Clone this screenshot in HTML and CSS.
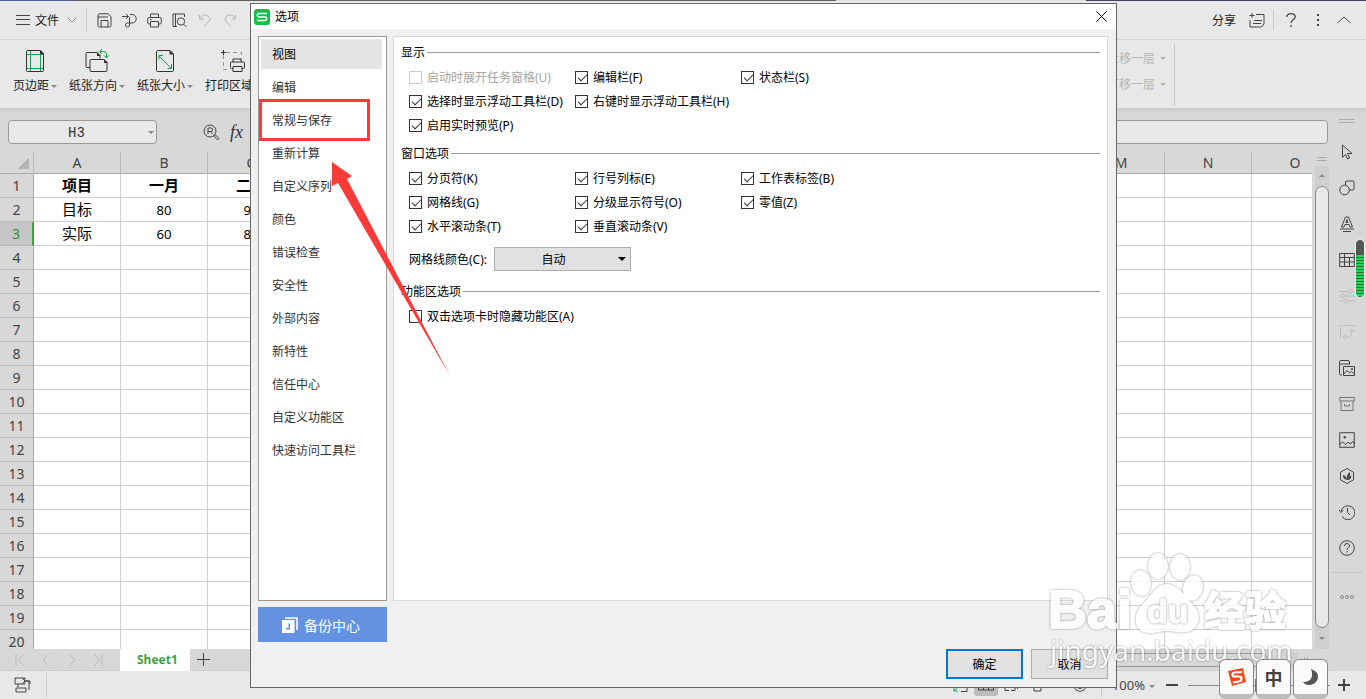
FILE: index.html
```html
<!DOCTYPE html>
<html lang="zh-CN">
<head>
    <meta charset="utf-8">
    <title>选项</title>
    <link rel="stylesheet" href="styles.css">
</head>
<body>
<div class="app">

    <!-- 顶部菜单栏 -->
    <header class="topbar">
        <button class="file-menu" type="button">
            <svg class="menu-lines" width="14" height="10" viewBox="0 0 14 10"><path d="M0 .5h14M0 4.500h14M0 9.500h14"/></svg>
            文件
            <svg width="10" height="6" viewBox="0 0 10 6"><path d="M.5.5 5 5 9.500.5"/></svg>
        </button>
        <span class="divider"></span>
        <div class="quick">
            <button type="button" aria-label="保存"><svg width="15" height="15" viewBox="0 0 15 15"><path d="M3 .8h8l3 3v8.700a1.500 1.500 0 0 1-1.500 1.500h-10A1.500 1.500 0 0 1 1 12.500v-10Q1 .8 3 .8ZM4 14V7.500h7V14M1 4h10"/></svg></button>
            <button type="button" aria-label="输出"><svg width="15" height="15" viewBox="0 0 15 15"><path d="M0 3.500h6M4 1l2.500 2.500L4 6M8 1.500h2a4 4 0 0 1 0 8.500H5.500M7.500 4v8a2 2 0 1 1-2-2"/></svg></button>
            <button type="button" aria-label="打印"><svg width="15" height="15" viewBox="0 0 15 15"><path d="M3.500 4.500V1h8v3.500M3.500 11H2.200A1.500 1.500 0 0 1 .7 9.500V6a1.500 1.500 0 0 1 1.500-1.500h10.600A1.500 1.500 0 0 1 14.300 6v3.500a1.500 1.500 0 0 1-1.500 1.500h-1.300M3.500 8.500h8V14h-8ZM3 6.500h1.500"/></svg></button>
            <button type="button" aria-label="打印预览"><svg width="15" height="15" viewBox="0 0 15 15"><path d="M5 13.500H1V1h11.500v3M3.500 1v12"/><circle cx="9" cy="8.500" r="3.700"/><path d="m11.800 11.300 2.700 2.700"/></svg></button>
            <button class="off" type="button" aria-label="撤销"><svg width="14" height="14" viewBox="0 0 14 14"><path d="M1.500 2v4h4M1.500 6c2-4 6-5 8.500-3 2.500 2 2 4.500 0 6.500l-4 4"/></svg></button>
            <button class="off" type="button" aria-label="恢复"><svg width="14" height="14" viewBox="0 0 14 14"><path d="M12.500 2v4h-4M12.500 6c-2-4-6-5-8.500-3-2.500 2-2 4.500 0 6.500l4 4"/></svg></button>
        </div>
        <div class="top-right">
            <button type="button">分享</button>
            <button type="button" aria-label="批注"><svg width="16" height="15" viewBox="0 0 16 15"><path d="M3 0v5M.5 2.500h5M7 1.500h8V11l-2.500 3H1V7M5 7.500h8M4 10.500h8"/></svg></button>
            <span class="divider small"></span>
            <button type="button" aria-label="帮助"><svg width="10" height="14" viewBox="0 0 10 14"><path d="M.8 4C.8 2 2.500.7 5 .7S9.200 2 9.200 4C9.200 6.500 5 6.500 5 10M5 12v2" stroke-width="1.300"/></svg></button>
            <button type="button" aria-label="更多"><svg width="2" height="12" viewBox="0 0 2 12"><path d="M1 0v2M1 5v2M1 10v2" stroke-width="2"/></svg></button>
            <button type="button" aria-label="收起"><svg width="14" height="8" viewBox="0 0 14 8"><path d="m.5 7 6.500-6 6.500 6"/></svg></button>
        </div>
    </header>

    <!-- 页面布局工具 -->
    <div class="ribbon">
        <button class="tool" type="button">
            <svg width="22" height="26" viewBox="0 0 22 26"><path class="green" d="M6.500 3v20M16.500 3v20M3 6.500h17M3 20.500h17"/><path class="dark" d="M4 2.500h12.500l3 3v17a1 1 0 0 1-1 1H3.500a1 1 0 0 1-1-1v-19q0-1 1.500-1Z"/><path class="solid" d="M16 2v4h4Z"/></svg>
            <span>页边距<i class="caret"></i></span>
        </button>
        <button class="tool" type="button">
            <svg width="26" height="26" viewBox="0 0 26 26"><path class="dark" d="M6 19.500H3a1 1 0 0 1-1-1v-13a1 1 0 0 1 1-1h10l3 3v3M7 11.500h13l3 3v8a1 1 0 0 1-1 1H7a1 1 0 0 1-1-1v-10a1 1 0 0 1 1-1Z"/><path class="solid" d="M13 4v4h4ZM20 11v4h4Z"/><path class="green" d="M16 3.500h4q2.500 0 2.500 3V10M18 1l-2.500 2.500L18 6M20 7.500l2.500 2.500L25 7.500"/></svg>
            <span>纸张方向<i class="caret"></i></span>
        </button>
        <button class="tool" type="button">
            <svg width="22" height="26" viewBox="0 0 22 26"><path class="green" d="m5 8 12 12M5 11.500V7.500h4M17.500 16v4.500h-4"/><path class="dark" d="M4 2.500h12l3.500 3.500v16.500a1 1 0 0 1-1 1h-15a1 1 0 0 1-1-1v-19q0-1 1.500-1Z"/><path class="solid" d="M15.500 2v4.500H20Z"/></svg>
            <span>纸张大小<i class="caret"></i></span>
        </button>
        <button class="tool" type="button">
            <svg width="26" height="26" viewBox="0 0 26 26"><path class="dash" d="M6 4.500h15.500V11M3.500 7v14.500H8"/><path class="dark" d="M3.500 2v5M1 4.500h5M13 14v-3h8v3M13 20.500h-1.500a1 1 0 0 1-1-1V15a1 1 0 0 1 1-1h12a1 1 0 0 1 1 1v4.500a1 1 0 0 1-1 1H22M13 18.500h9v5h-9Z"/></svg>
            <span>打印区域<i class="caret"></i></span>
        </button>
        <div class="layers">
            <button type="button" disabled>上移一层<i class="caret"></i></button>
            <button type="button" disabled>下移一层<i class="caret"></i></button>
        </div>
    </div>

    <div class="work">
        <main class="book">
            <div class="formula">
                <div class="name-box">
                    <input type="text" value="H3" aria-label="名称框">
                    <i class="caret"></i>
                </div>
                <svg class="find" width="17" height="17" viewBox="0 0 17 17"><circle cx="7" cy="7" r="6"/><path d="M5 10V4h3a1.500 1.500 0 0 1 0 3.500H5M7.500 7.500 9.500 10M11 12l1.500-1 3.500 3.500-1.500 1.500Z"/></svg>
                <span class="fx">fx</span>
                <input class="formula-input" type="text" aria-label="编辑栏">
            </div>
            <div class="sheet">
                <div class="grid">
                    <table>
                        <thead><tr id="cols"><th class="corner"></th></tr></thead>
                        <tbody id="rows"></tbody>
                    </table>
                </div>
                <div class="vscroll">
                    <span class="split"></span>
                    <div class="track">
                        <i class="up"></i>
                        <span class="thumb"></span>
                        <i class="down"></i>
                    </div>
                </div>
            </div>
            <div class="tabs">
                <div class="tab-nav">
                    <svg width="10" height="12" viewBox="0 0 10 12"><path d="M1 0v12M9 0 3.500 6 9 12"/></svg>
                    <svg width="10" height="12" viewBox="0 0 10 12"><path d="M8 0 2 6l6 6"/></svg>
                    <svg width="10" height="12" viewBox="0 0 10 12"><path d="m2 0 6 6-6 6"/></svg>
                    <svg width="10" height="12" viewBox="0 0 10 12"><path d="M9 0v12M1 0l5.500 6L1 12"/></svg>
                </div>
                <button class="tab" type="button">Sheet1</button>
                <button class="add" type="button" aria-label="新建工作表"><svg width="13" height="13" viewBox="0 0 13 13"><path d="M6.500 0v13M0 6.500h13"/></svg></button>
                <span class="hscroll"></span>
                <span class="hend"></span>
                <span class="hgrip"></span>
            </div>
        </main>

        <!-- 右侧任务窗格图标 -->
        <aside class="side">
            <span class="grip"></span>
            <svg viewBox="0 0 16 16"><path d="M3.500 1v12.500l3-3 2 4.500 2-1-2-4.500h4.500Z"/></svg>
            <svg viewBox="0 0 16 16"><circle cx="5.500" cy="10" r="4.800"/><path d="M6.500 5V2a1 1 0 0 1 1-1H14a1 1 0 0 1 1 1v7a1 1 0 0 1-1 1h-3.500"/></svg>
            <svg viewBox="0 0 16 16"><path d="M2.500 11 6.500 1h3l4 10h-2.500L10 8.500H6L5 11ZM7 6.500h2L8 3.500ZM1 13h14M4 15.500h8"/></svg>
            <svg viewBox="0 0 16 16"><path d="M.7 1.500h14.600v13H.7ZM.7 5.500h14.600M.7 10h14.600M5.500 1.500v13M10.500 5.500v9"/></svg>
            <svg class="off" viewBox="0 0 16 16"><path d="M0 3.500h9M13 3.500h3M0 8h2M6 8h10M0 13h5M9 13h7"/><circle cx="11" cy="3.500" r="2"/><circle cx="4" cy="8" r="2"/><circle cx="7" cy="13" r="2"/></svg>
            <svg class="off" viewBox="0 0 16 16"><path d="M4 1.500h12M1.500 4v11M1 1h1v1H1ZM4 13h5q4 0 4-7M7 10l-3 3 3 3M10 8l3-3 3 3"/></svg>
            <svg viewBox="0 0 16 16"><path d="M3 15H2a1.500 1.500 0 0 1-1.500-1.500V2A1.500 1.500 0 0 1 2 .5h7A1.500 1.500 0 0 1 10.500 2v2.500M.5 4H10M4.500 6.500h11v9h-11ZM5 14l3-3.500 2.500 2.500 2-1.500 3 2.500M12.500 8.500h1v1h-1Z"/></svg>
            <svg class="soft" viewBox="0 0 16 16"><path d="M.7 1.500h14.600V5H.7ZM2 5v9.500h12V5M5.500 8v2h5V8"/></svg>
            <svg viewBox="0 0 16 16"><path d="M.7.7h14.600v14.600H.7ZM1 12l2.500-2 3 2.500L9 10l2.500 2 2-2.500 2 2.500M5 4.500h1.500V6H5Z"/></svg>
            <svg viewBox="0 0 16 16"><path d="m8 .5 6.500 3.700v7.600L8 15.500l-6.500-3.700V4.200Z"/><path class="fill" d="M8 12Q3.500 11 4 7q3 .5 4 5M8 12q-1-5 2.500-8 1.500 3-.5 5 1-1 2.500-1.500Q12 12 8 12"/></svg>
            <svg viewBox="0 0 16 16"><path d="M3 12.500A7 7 0 1 0 2 7.500M0 6l2 2.500L4.500 6M8.500 4v4.500L11 11"/></svg>
            <svg viewBox="0 0 16 16"><circle cx="8" cy="8" r="7.300"/><path d="M5.500 6q0-2.500 2.500-2.500T10.500 6C10.500 7.500 8 8 8 10M8 11v1.500"/></svg>
            <span class="line"></span>
            <span class="dots"><i></i><i></i><i></i></span>
        </aside>
    </div>

    <!-- 状态栏 -->
    <footer class="status">
        <svg class="macro" width="17" height="16" viewBox="0 0 17 16"><path d="M1 1h10v6H1ZM8 1l3 3-3 3M4 7v3M2 15v-4h10v4ZM12 4h3v9M11 4h5v3"/></svg>
        <span class="divider"></span>
        <div class="views">
            <svg width="16" height="16" viewBox="0 0 16 16"><path d="M9 14.500h6V10"/><path class="green" d="m2 14 4-4M2 10v4h4"/></svg>
            <span class="picked"><svg width="16" height="16" viewBox="0 0 16 16"><path d="M.5 2h15v11H.5ZM.5 9.500h15M5.500 2v11M10.500 2v11"/></svg></span>
            <svg width="16" height="16" viewBox="0 0 16 16"><path d="M5 13.500H1V2M7 13.500h4V6M13.500 2v10"/></svg>
            <svg width="16" height="16" viewBox="0 0 16 16"><path d="M1 3h14v6H1ZM4 9v5h7V9"/></svg>
            <svg class="eye" width="18" height="16" viewBox="0 0 18 16"><path d="M1 8q8-13 16 0-8 13-16 0"/><circle cx="9" cy="8" r="3.500"/></svg>
        </div>
        <span class="divider"></span>
        <span class="zoom-text">100%<i class="caret"></i></span>
        <button type="button" aria-label="缩小"><svg width="12" height="12" viewBox="0 0 12 12"><path d="M0 6h12" stroke-width="2"/></svg></button>
        <input class="zoom" type="range" min="10" max="400" value="205" aria-label="缩放">
        <button type="button" aria-label="放大"><svg width="12" height="12" viewBox="0 0 12 12"><path d="M0 6h12M6 0v12" stroke-width="2"/></svg></button>
    </footer>

    <span class="gauge"></span>

    <!-- 选项对话框 -->
    <section class="dialog">
        <div class="dialog-title">
            <svg width="16" height="16" viewBox="0 0 16 16"><rect width="16" height="16" rx="3" fill="#12be46"/><path d="M13 4.500H5a1.700 1.700 0 0 0 0 3.500h6a1.700 1.700 0 0 1 0 3.500H3" fill="none" stroke="#fff" stroke-width="1.400"/></svg>
            <h2>选项</h2>
            <button type="button" aria-label="关闭"><svg width="11" height="11" viewBox="0 0 11 11"><path d="m.5.5 10 10M10.500.5l-10 10"/></svg></button>
        </div>
        <div class="dialog-body">
            <nav class="menu">
                <a class="active" href="#">视图</a>
                <a href="#">编辑</a>
                <a href="#">常规与保存</a>
                <a href="#">重新计算</a>
                <a href="#">自定义序列</a>
                <a href="#">颜色</a>
                <a href="#">错误检查</a>
                <a href="#">安全性</a>
                <a href="#">外部内容</a>
                <a href="#">新特性</a>
                <a href="#">信任中心</a>
                <a href="#">自定义功能区</a>
                <a href="#">快速访问工具栏</a>
            </nav>
            <div class="panel">
                <h3>显示</h3>
                <div class="checks">
                    <label class="disabled"><input type="checkbox" disabled>启动时展开任务窗格(U)</label>
                    <label><input type="checkbox" checked>编辑栏(F)</label>
                    <label><input type="checkbox" checked>状态栏(S)</label>
                    <label><input type="checkbox" checked>选择时显示浮动工具栏(D)</label>
                    <label class="wide"><input type="checkbox" checked>右键时显示浮动工具栏(H)</label>
                    <label><input type="checkbox" checked>启用实时预览(P)</label>
                </div>
                <h3>窗口选项</h3>
                <div class="checks">
                    <label><input type="checkbox" checked>分页符(K)</label>
                    <label><input type="checkbox" checked>行号列标(E)</label>
                    <label><input type="checkbox" checked>工作表标签(B)</label>
                    <label><input type="checkbox" checked>网格线(G)</label>
                    <label><input type="checkbox" checked>分级显示符号(O)</label>
                    <label><input type="checkbox" checked>零值(Z)</label>
                    <label><input type="checkbox" checked>水平滚动条(T)</label>
                    <label><input type="checkbox" checked>垂直滚动条(V)</label>
                </div>
                <div class="color-row">
                    <label for="lineColor">网格线颜色(C):</label>
                    <span class="select"><select id="lineColor"><option>自动</option></select></span>
                </div>
                <h3>功能区选项</h3>
                <div class="checks">
                    <label class="wide"><input type="checkbox">双击选项卡时隐藏功能区(A)</label>
                </div>
            </div>
        </div>
        <div class="dialog-foot">
            <button class="backup" type="button">
                <svg width="16" height="16" viewBox="0 0 16 16"><path d="M3 1h12v12" fill="none" stroke="#fff" stroke-width="1.500"/><path d="M0 3h12.500v13H0ZM6.500 6.500v4.500H4v1.500h4v-6Z" fill="#fff" fill-rule="evenodd"/></svg>
                备份中心
            </button>
            <div class="actions">
                <button class="ok" type="button">确定</button>
                <button type="button">取消</button>
            </div>
        </div>
        <!-- 红色标注 -->
        <span class="mark"></span>
        <svg class="arrow" width="119" height="216" viewBox="0 0 119 216"><path d="M0 0 20 14 15 17 118 214 6 21 0 24Z" fill="#fb3a3a"/></svg>
    </section>

    <!-- 水印 -->
    <svg class="watermark" width="250" height="125" viewBox="0 0 250 125">
        <g>
            <ellipse cx="95" cy="43" rx="9" ry="12" transform="rotate(-8 95 43)"/>
            <ellipse cx="112" cy="26" rx="9" ry="12"/>
            <ellipse cx="134" cy="27" rx="9" ry="12"/>
            <ellipse cx="147" cy="48" rx="9" ry="12" transform="rotate(15 147 48)"/>
            <path d="M121 45c-11 0-15 12-23 19-9 7-12 26 4 28 8 1 12-2 19-2s13 3 20 1c14-3 13-19 5-26-8-8-14-20-25-20Z"/>
        </g>
        <text class="wm-bai" x="2" y="88">Bai</text>
        <text class="wm-du" x="101" y="83">du</text>
        <text class="wm-cn" x="158" y="86">经验</text>
        <text class="wm-url" x="4" y="121">jingyan.baidu.com</text>
    </svg>

    <!-- 输入法 -->
    <div class="ime">
        <button type="button" aria-label="搜狗"><svg width="20" height="20" viewBox="0 0 20 20"><path d="m1 4 15-3 3 14-14 4Z" fill="#ee4c21"/><path d="M15 5 8 5.500q-3 .5-2.500 2.500T8 9.500h4q2.500 0 2.500 2.200T12 14.500l-6 1" fill="none" stroke="#fff" stroke-width="2.200"/></svg></button>
        <button type="button">中</button>
        <button type="button" aria-label="月亮"><svg width="18" height="18" viewBox="0 0 18 18"><path d="M9 1q8 3 7 9-2 7-9 7-4 0-6-3 8 0 9-6 .5-4-1-7Z" fill="#555"/></svg></button>
    </div>
</div>
<script src="script.js"></script>
</body>
</html>
```
FILE: styles.css
```css
* {
    box-sizing: border-box;
}

body {
    margin: 0;
    font-family: "Noto Sans", "Noto Sans CJK SC", sans-serif;
    font-size: 12px;
    color: #222;
    background: #e8e8e8;
}

button {
    font: inherit;
    color: inherit;
    background: none;
    border: none;
    padding: 0;
    display: flex;
    align-items: center;
    justify-content: center;
}

svg {
    fill: none;
    stroke: #444;
    display: block;
    flex: none;
}

.app {
    position: relative;
    height: 100vh;
    display: flex;
    flex-direction: column;
    overflow: hidden;
}

.divider {
    width: 1px;
    height: 24px;
    background: #ccc;
}

.divider.small {
    height: 20px;
}

.caret {
    display: inline-block;
    border: 3px solid transparent;
    border-top-color: #888;
    border-bottom: none;
    margin-left: 4px;
    vertical-align: middle;
}

.green {
    stroke: #1f9d55;
}

/* 顶部菜单栏 */
.topbar {
    height: 40px;
    padding: 1px 15px 0 16px;
    display: flex;
    align-items: center;
    border-bottom: 1px solid #d6d6d6;
    background: linear-gradient(90deg, #4a64a0 74px, #5f5f6b 74px 836px, #e0e0e6 836px 1086px, #44445a 1086px) top / 100% 1px no-repeat;
}

.file-menu {
    gap: 5px;
    margin-right: 9px;
}

.file-menu svg:last-child {
    margin-left: 3px;
    stroke: #888;
}

.quick {
    display: flex;
    margin-left: 5px;
}

.quick button {
    width: 25px;
}

.quick .off svg {
    stroke: #b5b5b5;
}

.top-right {
    margin-left: auto;
    display: flex;
    align-items: center;
}

.top-right button:nth-child(2) {
    margin: 0 8px 0 13px;
}

.top-right button:nth-child(4) {
    margin: 0 21px 0 12px;
}

.top-right button:nth-child(5) {
    margin-right: 18px;
}

/* 工具区 */
.ribbon {
    height: 68px;
    padding: 8px 191px 0 13px;
    display: flex;
    align-items: flex-start;
    gap: 12px;
}

.tool {
    flex-direction: column;
    white-space: nowrap;
}

.tool span {
    line-height: 20px;
    margin-top: 2px;
}

.tool .caret {
    margin-left: 2px;
}

.tool .dark {
    stroke: #333;
}

.tool .solid {
    fill: #333;
    stroke: none;
}

.tool .dash {
    stroke: #999;
    stroke-dasharray: 4 3;
}

.layers {
    margin: -4px 0 0 auto;
    padding: 1px 8px 9px 0;
    border-right: 1px solid #c8c8c8;
}

.layers button {
    height: 26px;
    color: #b5b5b5;
}

.layers .caret {
    border-top-color: #b5b5b5;
    margin-left: 5px;
}

/* 工作区 */
.work {
    flex: 1;
    min-height: 0;
    display: flex;
    background: linear-gradient(#c9c9c9, #d8d8d8 5px);
}

.book {
    flex: 1;
    min-width: 0;
    display: flex;
    flex-direction: column;
}

.formula {
    height: 44px;
    padding: 12px 1px 8px 8px;
    display: flex;
    align-items: center;
}

.name-box {
    position: relative;
    width: 149px;
}

.name-box input, .formula-input {
    width: 100%;
    height: 24px;
    display: block;
    border: 1px solid #999;
    border-radius: 4px;
    background: #e8e8e8;
    outline: none;
}

.name-box input {
    text-align: center;
    padding: 2px 12px 0 0;
    font: 14px "Liberation Mono", monospace;
    color: #333;
}

.name-box .caret {
    position: absolute;
    right: 3px;
    top: 11px;
}

.find {
    margin-left: 46px;
}

.fx {
    font: italic 18px "Liberation Serif", serif;
    color: #333;
    margin: 0 12px 0 10px;
}

.formula-input {
    flex: 1;
}

.sheet {
    flex: 1;
    min-height: 0;
    display: flex;
    gap: 3px;
}

.grid {
    flex: 1;
    overflow: hidden;
}

table {
    width: 1339px;
    table-layout: fixed;
    border-collapse: separate;
    border-spacing: 0;
    background: #fff;
}

th {
    font-weight: normal;
    font-size: 14px;
    color: #444;
    background: #d8d8d8;
    padding: 0;
}

thead th {
    width: 87px;
    height: 22px;
    line-height: 21px;
    border-bottom: 1px solid #aaa;
    border-right: 1px solid #bbb;
}

thead .corner {
    width: 34px;
    background: linear-gradient(135deg, transparent 50%, #b4b4b4 50%) 17px 6px / 12px 11px no-repeat #d8d8d8;
}

tbody th {
    height: 24px;
    line-height: 21px;
    border-right: 1px solid #aaa;
    border-bottom: 1px solid #bbb;
}

tbody .current {
    color: #2f8f35;
    background: #c6c6c6;
    border-right: 2px solid #3fa43f;
}

td {
    height: 24px;
    padding: 2px 0 0;
    line-height: 21px;
    text-align: center;
    font-size: 13px;
    color: #000;
    border-right: 1px solid #d0d0d0;
    border-bottom: 1px solid #d0d0d0;
}

td.head {
    padding: 0;
    font-size: 15px;
    font-weight: bold;
}

td.label {
    padding: 0;
    font-size: 15px;
}

/* 滚动条 */
.vscroll {
    width: 14px;
    display: flex;
    flex-direction: column;
}

.split {
    height: 4px;
    margin: 5px 2px;
    border-top: 1px solid #aaa;
    border-bottom: 1px solid #aaa;
}

.track {
    flex: 1;
    background: #cfcfcf;
    display: flex;
    flex-direction: column;
    align-items: center;
}

.up, .down {
    border: 3px solid transparent;
}

.up {
    margin: 8px 0 9px;
    border-top: none;
    border-bottom-color: #888;
}

.down {
    margin: 9px 0;
    border-bottom: none;
    border-top-color: #888;
}

.thumb {
    flex: 1;
    width: 14px;
    border: 1px solid #888;
    border-radius: 7px;
    background: #e8e8e8;
}

.tabs {
    height: 22px;
    padding-right: 21px;
    display: flex;
    align-items: center;
    border-bottom: 1px solid #ccc;
}

.tab-nav {
    width: 120px;
    padding-left: 15px;
    display: flex;
    gap: 16px;
}

.tab-nav svg {
    stroke: #bbb;
}

.tab {
    height: 22px;
    padding: 0 12px 0 17px;
    background: #fff;
    color: #3fa13f;
    font-weight: bold;
}

.add {
    margin-left: 7px;
}

.hscroll {
    flex: 1;
    height: 14px;
    margin-left: 200px;
    border: 1px solid #999;
    border-radius: 7px;
}

.hend {
    width: 13px;
    height: 14px;
    margin: 0 6px 0 17px;
    background: #cfcfcf;
}

.hgrip {
    width: 4px;
    height: 6px;
    border: 1px solid #aaa;
    border-width: 0 1px;
}

/* 右侧图标栏 */
.side {
    width: 37px;
    padding: 11px 1px 0 0;
    display: flex;
    flex-direction: column;
    align-items: center;
    gap: 20px;
}

.side svg {
    width: 16px;
    height: 16px;
}

.side .grip {
    width: 16px;
    height: 4px;
    margin-bottom: 1px;
    border-top: 1px solid #aaa;
    border-bottom: 1px solid #aaa;
}

.side .off {
    stroke: #bfbfbf;
}

.side .soft {
    stroke: #777;
}

.side .fill {
    fill: #444;
    stroke: none;
}

.side .line {
    width: 30px;
    height: 1px;
    margin: -4px 0 2px;
    background: #c3c3c3;
}

.dots {
    display: flex;
    gap: 1px;
}

.dots i {
    width: 4px;
    height: 4px;
    border: 1px solid #888;
    border-radius: 2px;
}

.gauge {
    position: absolute;
    right: 1px;
    top: 239px;
    width: 10px;
    height: 59px;
    border: 1px solid #eee;
    border-radius: 5px;
    background: linear-gradient(#555 15px, transparent 15px), repeating-linear-gradient(#25d35b 0 2px, #187438 2px 3px);
}

/* 状态栏 */
.status {
    height: 28px;
    padding: 0 16px 0 14px;
    display: flex;
    align-items: center;
}

.macro {
    margin-right: 15px;
}

.views {
    margin-left: auto;
    display: flex;
    align-items: center;
    gap: 10px;
}

.picked {
    padding: 3px 4px;
    margin: 0 -4px;
    background: #bbb;
    border-radius: 3px;
}

.eye {
    margin: 0 12px 0 15px;
}

.zoom-text {
    margin: 0 11px 0 10px;
    color: #444;
    font-size: 13px;
}

.zoom {
    appearance: none;
    width: 142px;
    height: 16px;
    margin: 0 8px 0 10px;
    background: linear-gradient(#888, #888) center / 100% 1px no-repeat;
}

.zoom::-webkit-slider-thumb {
    appearance: none;
    width: 9px;
    height: 13px;
    border: 1px solid #777;
    background: #eee;
}

/* 对话框 */
.dialog {
    position: absolute;
    top: 3px;
    left: 1px;
    right: 0;
    width: 867px;
    margin: 0 auto;
    border: 1px solid #666;
    background: #f0f0f0;
    color: #000;
}

.dialog-title {
    height: 25px;
    padding: 0 9px 0 3px;
    display: flex;
    align-items: center;
    background: #fff;
}

.dialog-title svg {
    stroke: none;
}

.dialog-title button svg {
    stroke: #000;
}

h2 {
    flex: 1;
    margin: 0 0 0 5px;
    font-size: 12px;
    line-height: 16px;
    font-weight: normal;
}

.dialog-body {
    padding: 7px 8px 0 7px;
    display: flex;
    gap: 6px;
}

.menu {
    width: 129px;
    padding: 2px;
    display: flex;
    flex-direction: column;
    gap: 3px;
    border: 1px solid #999;
    background: #fff;
}

.menu a {
    height: 30px;
    padding-left: 11px;
    margin-right: 2px;
    line-height: 32px;
    color: #333;
    text-decoration: none;
}

.menu .active {
    background: #e5e5e5;
    color: #000;
}

.panel {
    flex: 1;
    min-height: 565px;
    padding: 7px;
    border: 1px solid #d9d9d9;
    background: #fff;
}

h3 {
    height: 16px;
    margin: 0 0 5px;
    display: flex;
    align-items: center;
    gap: 2px;
    font-size: 12px;
    font-weight: normal;
}

h3::after {
    content: "";
    flex: 1;
    height: 1px;
    background: #999;
}

.checks {
    padding-left: 8px;
    margin-bottom: 8px;
    display: grid;
    grid-template-columns: 166px 166px 166px;
    grid-auto-rows: 24px;
}

.checks label {
    display: flex;
    align-items: center;
    gap: 5px;
    white-space: nowrap;
}

.checks .wide {
    grid-column: span 2;
}

.checks .disabled {
    color: #a5a5a5;
}

input[type="checkbox"] {
    appearance: none;
    position: relative;
    width: 13px;
    height: 13px;
    margin: 0;
    border: 1px solid #333;
    background: #fff;
}

input[type="checkbox"]:disabled {
    border-color: #ccc;
}

input[type="checkbox"]:checked::before {
    content: "";
    position: absolute;
    left: 4px;
    top: 0;
    width: 4px;
    height: 8px;
    border: 1px solid #333;
    border-width: 0 1px 1px 0;
    transform: rotate(45deg);
}

.color-row {
    padding-left: 8px;
    margin: 9px 0 12px;
    display: flex;
    align-items: center;
    gap: 7px;
}

.select {
    position: relative;
}

.select::after {
    content: "";
    position: absolute;
    right: 5px;
    top: 10px;
    border: 4px solid transparent;
    border-top-color: #000;
    border-bottom: none;
}

select {
    appearance: none;
    display: block;
    width: 137px;
    height: 24px;
    padding: 0 18px 0 0;
    border: 1px solid #adadad;
    border-radius: 0;
    background: #e1e1e1;
    font: inherit;
    color: inherit;
    text-align-last: center;
}

.dialog-foot {
    padding: 6px 8px 8px 7px;
    display: flex;
    align-items: flex-start;
    justify-content: space-between;
}

.backup {
    width: 129px;
    height: 35px;
    padding-right: 3px;
    gap: 6px;
    background: #6492e1;
    color: #fff;
    font-size: 14px;
}

.backup svg {
    stroke: none;
}

.actions {
    margin-top: 42px;
    display: flex;
    gap: 8px;
}

.actions button {
    width: 77px;
    height: 30px;
    border: 1px solid #adadad;
    background: #e1e1e1;
}

.actions .ok {
    border: 2px solid #0078d7;
}

.mark {
    position: absolute;
    left: 8px;
    top: 95px;
    width: 111px;
    height: 42px;
    border: 3px solid #fb3a3a;
}

.arrow {
    position: absolute;
    left: 81px;
    top: 158px;
    stroke: none;
}

/* 水印 */
.watermark {
    position: absolute;
    right: 70px;
    bottom: 34px;
    fill: #fff;
    stroke: #fff;
    stroke-width: 2px;
    opacity: 0.8;
    overflow: visible;
    pointer-events: none;
}

.watermark g, .watermark text {
    filter: drop-shadow(0 0 1px rgba(0, 0, 0, 0.5));
}

.wm-bai {
    font: bold 54px "Liberation Sans", sans-serif;
}

.wm-du {
    font: bold 34px "Liberation Sans", sans-serif;
    stroke-width: 1px;
}

.wm-cn {
    font: bold 41px "Noto Sans CJK SC", sans-serif;
}

.wm-url {
    font: 28px "Noto Sans", sans-serif;
    stroke-width: 0;
}

/* 输入法 */
.ime {
    position: absolute;
    right: 38px;
    bottom: 0;
    display: flex;
    gap: 2px;
}

.ime button {
    width: 35px;
    height: 40px;
    border: 1px solid #888;
    border-bottom: 5px solid #bbb;
    border-radius: 6px;
    background: #fafafa;
    color: #444;
    font-size: 18px;
    font-weight: bold;
}

.ime svg {
    stroke: none;
}
```
FILE: script.js
```javascript
const letters = "ABCDEFGHIJKLMNO".split("");
const data = [
    ["项目", "一月", "二月"],
    ["目标", "80", "90"],
    ["实际", "60", "80"]
];

// 列标
letters.forEach(l => {
    const th = document.createElement("th");
    th.textContent = l;
    document.getElementById("cols").appendChild(th);
});

// 行号和单元格
for (let r = 0; r < 20; r++) {
    const tr = document.createElement("tr");
    const th = document.createElement("th");
    th.textContent = r + 1;
    if (r === 2) th.className = "current";
    tr.appendChild(th);
    letters.forEach((l, c) => {
        const td = document.createElement("td");
        if (data[r] && data[r][c]) td.textContent = data[r][c];
        if (r === 0) td.className = "head";
        else if (c === 0) td.className = "label";
        tr.appendChild(td);
    });
    document.getElementById("rows").appendChild(tr);
}
```
